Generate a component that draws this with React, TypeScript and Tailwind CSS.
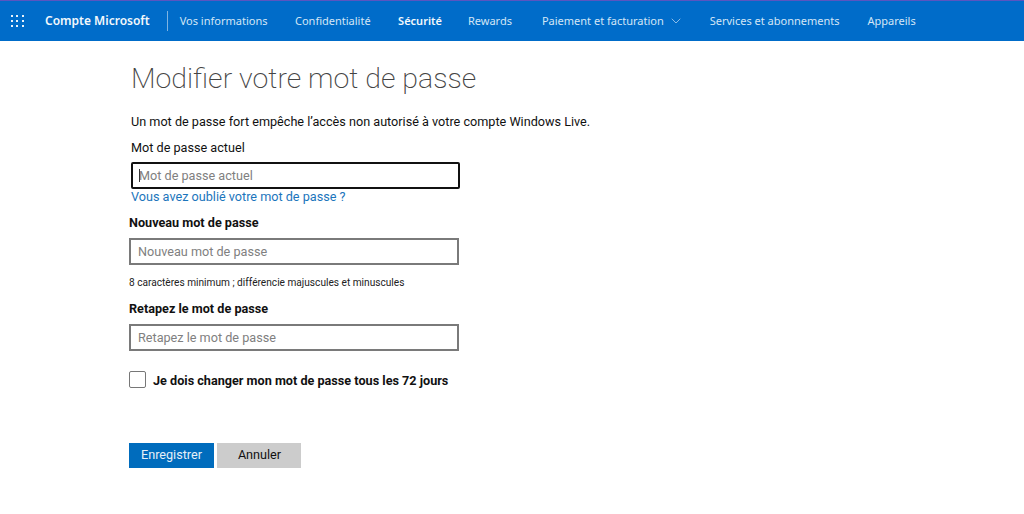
import { ChevronDown } from 'lucide-react';

const navItems = ['Vos informations', 'Confidentialité'];

function AppGrid() {
  return (
    <div className="grid w-[13px] grid-cols-3 gap-[3px]">
      {Array.from({ length: 9 }).map((_, i) => (
        <span key={i} className="h-[2px] w-[2px] bg-[#e8f2fa]" />
      ))}
    </div>
  );
}

function Header() {
  return (
    <header className="flex h-[41px] items-center border-t border-[#5a55c0] bg-[#006cc9] pl-[11px] font-['Noto_Sans',sans-serif] text-[11px] text-[#d3e6f6]">
      <AppGrid />
      <span className="ml-[21px] text-[12px] font-semibold text-[#f2f8fc]">Compte Microsoft</span>
      <span className="ml-[17px] h-5 w-px bg-[#7fb4e2]" />
      <nav className="ml-[12px] flex items-center">
        {navItems.map((item) => (
          <span key={item} className="mr-[27.5px]">{item}</span>
        ))}
        <span className="mr-[26px] font-semibold text-[#f2f8fc]">Sécurité</span>
        <span className="mr-[30px]">Rewards</span>
        <span className="mr-[26px] flex items-center gap-[4px]">
          Paiement et facturation
          <ChevronDown size={16} strokeWidth={1} />
        </span>
        <span className="mr-[28px]">Services et abonnements</span>
        <span>Appareils</span>
      </nav>
    </header>
  );
}

function Field({ label, placeholder }: { label: string; placeholder: string }) {
  return (
    <div>
      <label className="block text-[12.65px] font-bold leading-[16px] text-[#111]">{label}</label>
      <input
        placeholder={placeholder}
        className="mt-[7px] block h-[27px] w-[330px] border-2 border-[#7a7a7a] bg-white px-[7px] text-[12.65px] outline-none placeholder:text-[#808080]"
      />
    </div>
  );
}

export default function App() {
  return (
    <div className="h-[514px] w-[1024px] overflow-hidden bg-white font-['Roboto',sans-serif]">
      <Header />
      <main className="pl-[129px]">
        <div className="pl-[2px]">
          <h1 className="mt-[20px] text-[28.5px] font-extralight leading-[36px] text-[#444]">Modifier votre mot de passe</h1>
          <p className="mt-[16px] text-[12.65px] leading-[18px] text-[#111]">
            Un mot de passe fort empêche l’accès non autorisé à votre compte Windows Live.
          </p>
          <p className="mt-[8px] text-[12.65px] leading-[18px] text-[#111]">Mot de passe actuel</p>
          <div className="relative mt-[5px]">
            <input
              placeholder="Mot de passe actuel"
              className="block h-[27px] w-[329px] rounded-[2px] border-2 border-[#111] bg-white px-[6px] text-[12.65px] outline-none placeholder:text-[#808080]"
            />
            <span className="absolute left-[8px] top-[7px] h-[13px] w-px bg-[#333]" />
          </div>
          <a className="block text-[12.65px] leading-[16px] text-[#1b75bc]">Vous avez oublié votre mot de passe ?</a>
        </div>
        <div className="mt-[10px]">
          <Field label="Nouveau mot de passe" placeholder="Nouveau mot de passe" />
        </div>
        <p className="mt-[11px] text-[10.15px] leading-[14px] text-[#222]">8 caractères minimum ; différencie majuscules et minuscules</p>
        <div className="mt-[11px]">
          <Field label="Retapez le mot de passe" placeholder="Retapez le mot de passe" />
        </div>
        <label className="mt-[20px] flex items-start gap-[7px]">
          <span className="h-[17px] w-[17px] rounded-[2px] border border-[#777] bg-white" />
          <span className="pt-px text-[12.65px] font-bold leading-[17px] text-[#111]">Je dois changer mon mot de passe tous les 72 jours</span>
        </label>
        <div className="mt-[54px] flex gap-[3px]">
          <button className="h-[25px] w-[85px] bg-[#006cbd] text-[12.65px] text-[#e6f0f8]">Enregistrer</button>
          <button className="h-[25px] w-[84px] bg-[#cccccc] pl-px text-[12.65px] text-[#111]">Annuler</button>
        </div>
      </main>
    </div>
  );
}
